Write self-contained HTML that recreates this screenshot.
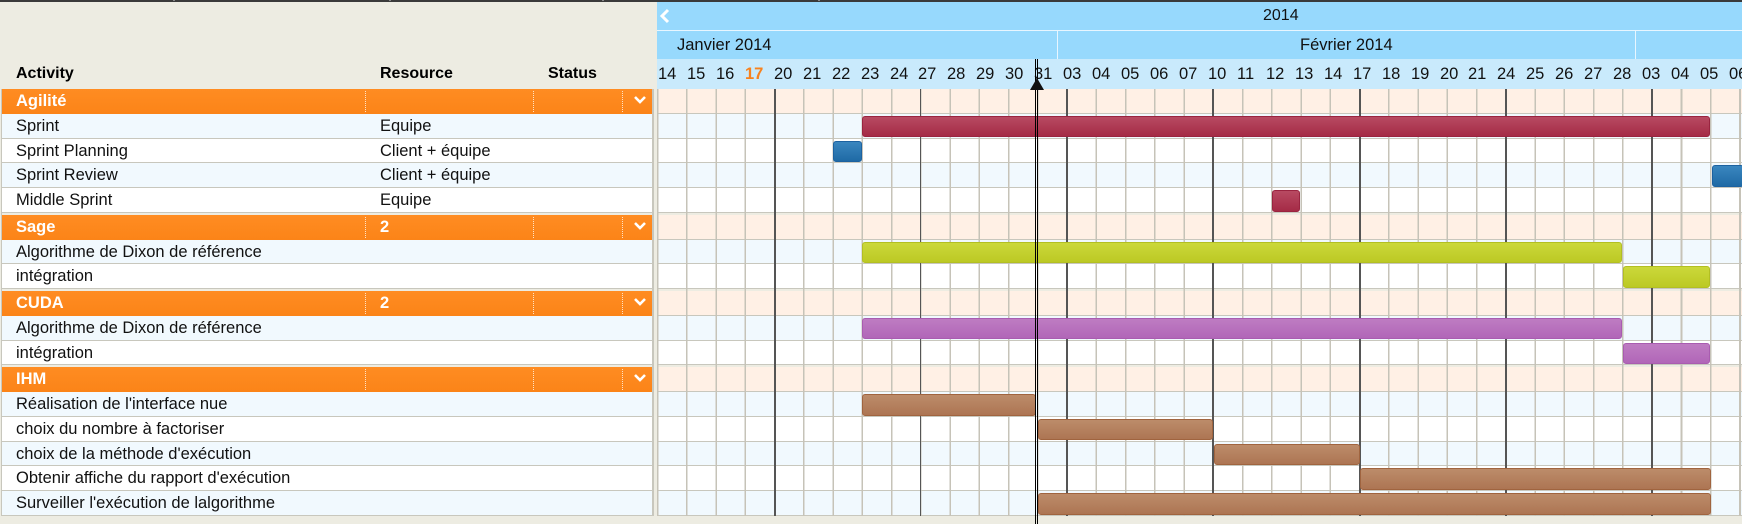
<!DOCTYPE html>
<html><head><meta charset="utf-8"><style>
*{margin:0;padding:0;box-sizing:border-box}
body{width:1742px;height:524px;overflow:hidden;background:#edece2;font-family:"Liberation Sans",Arial,sans-serif;position:relative}
.a{position:absolute}
.topbar{left:0;top:0;width:1742px;height:2px;background:#3a3a3a}
.yr{left:657px;top:2px;width:1085px;height:29px;background:#97d9fd;border-bottom:1px solid #e8f6ff}
.mo{top:31px;height:28px;background:#97d9fd;font-size:16.5px;color:#111;line-height:28px}
.dayrow{left:657px;top:59px;width:1085px;height:30px;background:#c9eafc}
.d{top:62px;font-size:16.5px;color:#111;line-height:24px}
.hd{top:64px;font-size:16px;font-weight:bold;color:#000;line-height:20px}
.lrow{left:2px;width:651px;height:24.75px;border-bottom:1.5px solid #c8c7bd;font-size:16.5px;line-height:24px;color:#111}
.lrow span{position:absolute;top:0}
.g{background:linear-gradient(#ff8c22,#fb8418);color:#fff;font-weight:bold;border-bottom:none}
.lb{background:#f1f9fe}
.wh{background:#fff}
.sep{position:absolute;top:2px;height:21px;border-left:1px dotted #ffe2c4}
.chev{position:absolute;left:630px;top:3px;width:16px;height:16px}
.crow{left:657px;width:1085px;height:24.75px;border-bottom:1.5px solid #c8c7bd}
.cg{background:#fff0e5}
.grid{left:657px;top:89px;width:1085px;height:427px;background:repeating-linear-gradient(to right,#c6c3b8 0 1.5px,transparent 1.5px 29.25px);pointer-events:none}
.wk{top:89px;width:1.5px;height:427px;background:#555}
.bar{height:21.5px;border-radius:3px}
.red{background:linear-gradient(#b84a62,#a52b46);border:1px solid #9a2440}
.blue{background:linear-gradient(#3a86bf,#1f6aa5);border:1px solid #1d62a0}
.lime{background:linear-gradient(#cbd83a,#bcc924);border:1px solid #b3bf22}
.pur{background:linear-gradient(#be7cc2,#b166b8);border:1px solid #a95cb0}
.brn{background:linear-gradient(#bc8c6a,#ad7553);border:1px solid #a0643f}
</style></head><body>
<div class="a topbar"></div>
<div class="a" style="left:173px;top:0;width:2px;height:1px;background:#888"></div>
<div class="a" style="left:389px;top:0;width:2px;height:1px;background:#888"></div>
<div class="a" style="left:602px;top:0;width:2px;height:1px;background:#888"></div>
<div class="a" style="left:818px;top:0;width:2px;height:1px;background:#888"></div>

<!-- timeline header -->
<div class="a yr"></div>
<svg class="a" style="left:659px;top:8px" width="12" height="16" viewBox="0 0 12 16"><path d="M9 2 L3 8 L9 14" stroke="#fff" stroke-width="3" fill="none"/></svg>
<div class="a" style="left:1263px;top:2px;font-size:16px;line-height:28px;color:#111">2014</div>
<div class="a mo" style="left:657px;width:401px;padding-left:20px;border-right:1px solid #e8f6ff">Janvier 2014</div>
<div class="a mo" style="left:1058px;width:578px;padding-left:242px;border-right:1px solid #e8f6ff">Février 2014</div>
<div class="a mo" style="left:1636px;width:106px"></div>
<div class="a dayrow"></div>

<div class="a d" style="left:658px">14</div>
<div class="a d" style="left:687px">15</div>
<div class="a d" style="left:716px">16</div>
<div class="a d" style="left:745px;color:#f7821e;font-weight:bold">17</div>
<div class="a d" style="left:774px">20</div>
<div class="a d" style="left:803px">21</div>
<div class="a d" style="left:832px">22</div>
<div class="a d" style="left:861px">23</div>
<div class="a d" style="left:890px">24</div>
<div class="a d" style="left:918px">27</div>
<div class="a d" style="left:947px">28</div>
<div class="a d" style="left:976px">29</div>
<div class="a d" style="left:1005px">30</div>
<div class="a d" style="left:1034px">31</div>
<div class="a d" style="left:1063px">03</div>
<div class="a d" style="left:1092px">04</div>
<div class="a d" style="left:1121px">05</div>
<div class="a d" style="left:1150px">06</div>
<div class="a d" style="left:1179px">07</div>
<div class="a d" style="left:1208px">10</div>
<div class="a d" style="left:1237px">11</div>
<div class="a d" style="left:1266px">12</div>
<div class="a d" style="left:1295px">13</div>
<div class="a d" style="left:1324px">14</div>
<div class="a d" style="left:1353px">17</div>
<div class="a d" style="left:1382px">18</div>
<div class="a d" style="left:1411px">19</div>
<div class="a d" style="left:1440px">20</div>
<div class="a d" style="left:1468px">21</div>
<div class="a d" style="left:1497px">24</div>
<div class="a d" style="left:1526px">25</div>
<div class="a d" style="left:1555px">26</div>
<div class="a d" style="left:1584px">27</div>
<div class="a d" style="left:1613px">28</div>
<div class="a d" style="left:1642px">03</div>
<div class="a d" style="left:1671px">04</div>
<div class="a d" style="left:1700px">05</div>
<div class="a d" style="left:1729px">06</div>

<!-- left header -->
<div class="a hd" style="left:16px">Activity</div>
<div class="a hd" style="left:380px">Resource</div>
<div class="a hd" style="left:548px">Status</div>

<!-- left rows -->
<div class="a lrow g" style="top:89px"><span style="left:14px">Agilité</span><i class="sep" style="left:363px"></i><i class="sep" style="left:531px"></i><i class="sep" style="left:620px"></i><svg class="chev" viewBox="0 0 16 16"><path d="M3 5 L8 10 L13 5" stroke="#fff" stroke-width="2.6" fill="none"/></svg></div>
<div class="a lrow lb" style="top:113.75px"><span style="left:14px">Sprint</span><span style="left:378px">Equipe</span></div>
<div class="a lrow wh" style="top:138.5px"><span style="left:14px">Sprint Planning</span><span style="left:378px">Client + équipe</span></div>
<div class="a lrow lb" style="top:163.25px"><span style="left:14px">Sprint Review</span><span style="left:378px">Client + équipe</span></div>
<div class="a lrow wh" style="top:188px"><span style="left:14px">Middle Sprint</span><span style="left:378px">Equipe</span></div>
<div class="a lrow g" style="top:214.75px"><span style="left:14px">Sage</span><span style="left:378px">2</span><i class="sep" style="left:363px"></i><i class="sep" style="left:531px"></i><i class="sep" style="left:620px"></i><svg class="chev" viewBox="0 0 16 16"><path d="M3 5 L8 10 L13 5" stroke="#fff" stroke-width="2.6" fill="none"/></svg></div>
<div class="a lrow lb" style="top:239.5px"><span style="left:14px">Algorithme de Dixon de référence</span></div>
<div class="a lrow wh" style="top:264.25px"><span style="left:14px">intégration</span></div>
<div class="a lrow g" style="top:291px"><span style="left:14px">CUDA</span><span style="left:378px">2</span><i class="sep" style="left:363px"></i><i class="sep" style="left:531px"></i><i class="sep" style="left:620px"></i><svg class="chev" viewBox="0 0 16 16"><path d="M3 5 L8 10 L13 5" stroke="#fff" stroke-width="2.6" fill="none"/></svg></div>
<div class="a lrow lb" style="top:315.75px"><span style="left:14px">Algorithme de Dixon de référence</span></div>
<div class="a lrow wh" style="top:340.5px"><span style="left:14px">intégration</span></div>
<div class="a lrow g" style="top:367.25px"><span style="left:14px">IHM</span><i class="sep" style="left:363px"></i><i class="sep" style="left:531px"></i><i class="sep" style="left:620px"></i><svg class="chev" viewBox="0 0 16 16"><path d="M3 5 L8 10 L13 5" stroke="#fff" stroke-width="2.6" fill="none"/></svg></div>
<div class="a lrow lb" style="top:392px"><span style="left:14px">Réalisation de l'interface nue</span></div>
<div class="a lrow wh" style="top:416.75px"><span style="left:14px">choix du nombre à factoriser</span></div>
<div class="a lrow lb" style="top:441.5px"><span style="left:14px">choix de la méthode d'exécution</span></div>
<div class="a lrow wh" style="top:466.25px"><span style="left:14px">Obtenir affiche du rapport d'exécution</span></div>
<div class="a lrow lb" style="top:491px"><span style="left:14px">Surveiller l'exécution de lalgorithme</span></div>
<div class="a" style="left:1px;top:89px;width:1px;height:427px;background:#c8c7bd"></div>
<div class="a" style="left:652px;top:89px;width:1.5px;height:427px;background:#c8c7bd"></div>

<!-- chart rows -->
<div class="a crow cg" style="top:89px"></div>
<div class="a crow lb" style="top:113.75px"></div>
<div class="a crow wh" style="top:138.5px"></div>
<div class="a crow lb" style="top:163.25px"></div>
<div class="a crow wh" style="top:188px"></div>
<div class="a crow cg" style="top:214.75px"></div>
<div class="a crow lb" style="top:239.5px"></div>
<div class="a crow wh" style="top:264.25px"></div>
<div class="a crow cg" style="top:291px"></div>
<div class="a crow lb" style="top:315.75px"></div>
<div class="a crow wh" style="top:340.5px"></div>
<div class="a crow cg" style="top:367.25px"></div>
<div class="a crow lb" style="top:392px"></div>
<div class="a crow wh" style="top:416.75px"></div>
<div class="a crow lb" style="top:441.5px"></div>
<div class="a crow wh" style="top:466.25px"></div>
<div class="a crow lb" style="top:491px"></div>
<div class="a grid"></div>
<div class="a wk" style="left:774px"></div>
<div class="a wk" style="left:919.5px"></div>
<div class="a wk" style="left:1066px"></div>
<div class="a wk" style="left:1212px"></div>
<div class="a wk" style="left:1359px"></div>
<div class="a wk" style="left:1505px"></div>
<div class="a wk" style="left:1651px"></div>

<!-- bars -->
<div class="a bar red" style="left:862px;top:115.5px;width:848px"></div>
<div class="a bar blue" style="left:833px;top:140.5px;width:29px"></div>
<div class="a bar blue" style="left:1712px;top:165px;width:32px"></div>
<div class="a bar red" style="left:1272px;top:190px;width:28px"></div>
<div class="a bar lime" style="left:862px;top:241.5px;width:760px"></div>
<div class="a bar lime" style="left:1623px;top:266px;width:87px"></div>
<div class="a bar pur" style="left:862px;top:317.5px;width:760px"></div>
<div class="a bar pur" style="left:1623px;top:342.5px;width:87px"></div>
<div class="a bar brn" style="left:862px;top:394px;width:174px"></div>
<div class="a bar brn" style="left:1038px;top:418.5px;width:175px"></div>
<div class="a bar brn" style="left:1214px;top:443.5px;width:146px"></div>
<div class="a bar brn" style="left:1360px;top:468px;width:351px"></div>
<div class="a bar brn" style="left:1038px;top:493px;width:673px"></div>

<!-- today line -->
<div class="a" style="left:1035px;top:59px;width:1px;height:465px;background:#000"></div>
<div class="a" style="left:1037px;top:59px;width:1px;height:465px;background:#000"></div>
<svg class="a" style="left:1030px;top:78px" width="14" height="12" viewBox="0 0 14 12"><path d="M7 0 L14 12 L0 12 Z" fill="#111"/></svg>
</body></html>
